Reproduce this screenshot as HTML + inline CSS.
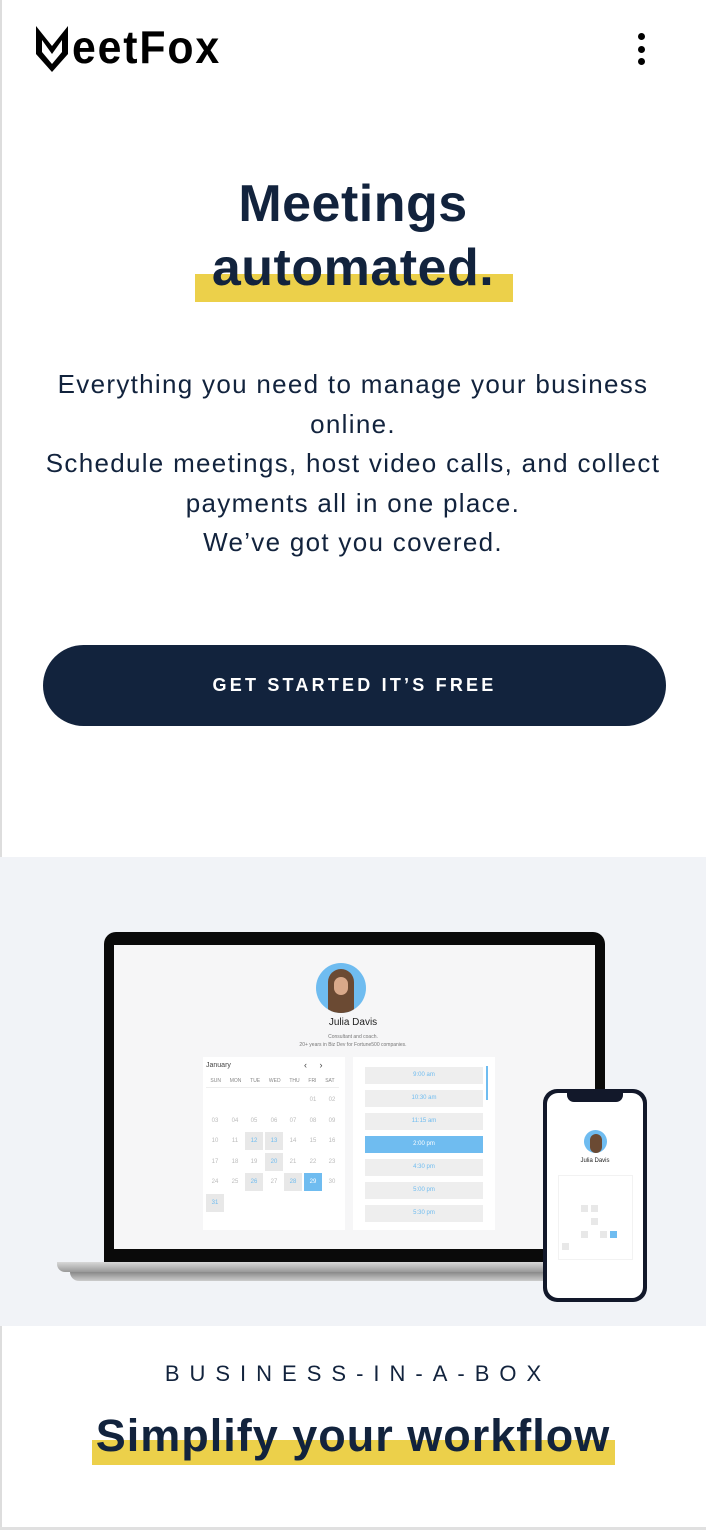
<!DOCTYPE html>
<html><head><meta charset="utf-8"><style>
*{margin:0;padding:0;box-sizing:border-box}
body{width:706px;height:1530px;position:relative;background:#fff;font-family:"Liberation Sans",sans-serif;color:#12233d;overflow:hidden}
.a{position:absolute}
.c{text-align:center;left:0;width:706px}
.d{position:absolute;width:18px;height:18px;font-size:6px;color:#bbb;text-align:center;line-height:18px}
.h{background:#e8e8e8;color:#6fbcf0}
.s{position:absolute;left:365px;width:118px;height:17px;background:#eee;font-size:6px;color:#6fbcf0;text-align:center;line-height:17px}
</style></head><body>
<div class="a" style="left:0;top:0;width:2px;height:1530px;background:#ddd"></div>
<svg class="a" style="left:34px;top:24px" width="36" height="50" viewBox="0 0 36 50"><path d="M2 2 L18 22 L34 2 V30 L18 48 L2 30 Z M8 16 V28 L18 40 L28 28 V16 L18 30 Z" fill="#000" fill-rule="evenodd"/></svg>
<div class="a" style="left:72px;top:20px;font-size:46px;font-weight:bold;color:#000;letter-spacing:2px;transform:scaleX(.93);transform-origin:left">eetFox</div>
<div class="a" style="left:638px;top:33px;width:7px;height:7px;border-radius:50%;background:#000"></div>
<div class="a" style="left:638px;top:46px;width:7px;height:7px;border-radius:50%;background:#000"></div>
<div class="a" style="left:638px;top:58px;width:7px;height:7px;border-radius:50%;background:#000"></div>
<div class="a" style="left:195px;top:274px;width:318px;height:28px;background:#ecd04a"></div>
<div class="a c" style="top:172px;font-size:52px;font-weight:bold;line-height:64px;letter-spacing:0.5px">Meetings<br>automated.</div>
<div class="a c" style="top:365px;font-size:26px;line-height:39.5px;letter-spacing:1.3px;white-space:nowrap">Everything you need to manage your business<br>online.<br>Schedule meetings, host video calls, and collect<br>payments all in one place.<br>We’ve got you covered.</div>
<div class="a" style="left:43px;top:645px;width:623px;height:81px;border-radius:41px;background:#12233d;color:#fff;font-size:18px;font-weight:bold;letter-spacing:3.2px;text-align:center;line-height:81px">GET STARTED IT’S FREE</div>
<div class="a" style="left:0;top:857px;width:706px;height:469px;background:#f1f3f7"></div>
<div class="a" style="left:104px;top:932px;width:501px;height:332px;background:#0a0a0a;border-radius:12px 12px 0 0"></div>
<div class="a" style="left:114px;top:945px;width:481px;height:304px;background:#f6f6f7"></div>
<div class="a" style="left:57px;top:1262px;width:545px;height:10px;background:linear-gradient(#d8d8d8,#999);border-radius:0 0 8px 8px"></div>
<div class="a" style="left:70px;top:1272px;width:520px;height:9px;background:linear-gradient(#888,#ccc);border-radius:0 0 40px 40px"></div>
<div class="a" style="left:316px;top:963px;width:50px;height:50px;border-radius:50%;background:#6fbcf0;overflow:hidden"><div style="position:absolute;left:12px;top:6px;width:26px;height:44px;border-radius:13px 13px 4px 4px;background:#6b4a33"></div><div style="position:absolute;left:18px;top:14px;width:14px;height:18px;border-radius:7px;background:#d9a98a"></div></div>
<div class="a c" style="top:1017px;font-size:10px;color:#222">Julia Davis</div>
<div class="a c" style="top:1033px;font-size:5px;color:#777;line-height:8px">Consultant and coach.<br>20+ years in Biz Dev for Fortune500 companies.</div>
<div class="a" style="left:203px;top:1057px;width:142px;height:173px;background:#fff"></div>
<div class="a" style="left:206px;top:1062px;font-size:7px;color:#444">January</div>
<div class="a" style="left:304px;top:1060px;font-size:9px;color:#444">‹ &nbsp;&nbsp;&nbsp; ›</div>
<div class="a" style="left:206px;top:1078px;width:133px;height:10px;border-bottom:1px solid #eee"></div>
<div class="a" style="left:206px;top:1078px;width:133px;font-size:5px;color:#888;display:flex;justify-content:space-around;white-space:nowrap"><span>SUN</span><span>MON</span><span>TUE</span><span>WED</span><span>THU</span><span>FRI</span><span>SAT</span></div>
<div class="d" style="left:304px;top:1091px">01</div><div class="d" style="left:323px;top:1091px">02</div>
<div class="d" style="left:206px;top:1112px">03</div><div class="d" style="left:226px;top:1112px">04</div><div class="d" style="left:245px;top:1112px">05</div><div class="d" style="left:265px;top:1112px">06</div><div class="d" style="left:284px;top:1112px">07</div><div class="d" style="left:304px;top:1112px">08</div><div class="d" style="left:323px;top:1112px">09</div>
<div class="d" style="left:206px;top:1132px">10</div><div class="d" style="left:226px;top:1132px">11</div><div class="d h" style="left:245px;top:1132px">12</div><div class="d h" style="left:265px;top:1132px">13</div><div class="d" style="left:284px;top:1132px">14</div><div class="d" style="left:304px;top:1132px">15</div><div class="d" style="left:323px;top:1132px">16</div>
<div class="d" style="left:206px;top:1153px">17</div><div class="d" style="left:226px;top:1153px">18</div><div class="d" style="left:245px;top:1153px">19</div><div class="d h" style="left:265px;top:1153px">20</div><div class="d" style="left:284px;top:1153px">21</div><div class="d" style="left:304px;top:1153px">22</div><div class="d" style="left:323px;top:1153px">23</div>
<div class="d" style="left:206px;top:1173px">24</div><div class="d" style="left:226px;top:1173px">25</div><div class="d h" style="left:245px;top:1173px">26</div><div class="d" style="left:265px;top:1173px">27</div><div class="d h" style="left:284px;top:1173px">28</div><div class="d" style="left:304px;top:1173px;background:#6fbcf0;color:#fff">29</div><div class="d" style="left:323px;top:1173px">30</div>
<div class="d h" style="left:206px;top:1194px">31</div>
<div class="a" style="left:353px;top:1057px;width:142px;height:173px;background:#fff"></div>
<div class="a" style="left:486px;top:1066px;width:2px;height:34px;background:#6fbcf0"></div>
<div class="s" style="top:1067px">9:00 am</div><div class="s" style="top:1090px">10:30 am</div><div class="s" style="top:1113px">11:15 am</div>
<div class="s" style="top:1136px;background:#6fbcf0;color:#fff">2:00 pm</div><div class="s" style="top:1159px">4:30 pm</div><div class="s" style="top:1182px">5:00 pm</div><div class="s" style="top:1205px">5:30 pm</div>
<div class="a" style="left:543px;top:1089px;width:104px;height:213px;background:#12182a;border-radius:14px"></div>
<div class="a" style="left:547px;top:1093px;width:96px;height:205px;background:#fff;border-radius:11px"></div>
<div class="a" style="left:567px;top:1092px;width:56px;height:10px;background:#12182a;border-radius:0 0 7px 7px"></div>
<div class="a" style="left:584px;top:1130px;width:23px;height:23px;border-radius:50%;background:#6fbcf0"><div style="margin:4px auto;width:12px;height:19px;border-radius:6px;background:#6b4a33"></div></div>
<div class="a" style="left:547px;top:1158px;width:96px;text-align:center;font-size:6px;color:#222">Julia Davis</div>
<div class="a" style="left:558px;top:1175px;width:75px;height:85px;border:1px solid #f2f2f2"></div>
<div class="a" style="left:562px;top:1243px;width:7px;height:7px;background:#e8e8e8"></div>
<div class="a" style="left:581px;top:1205px;width:7px;height:7px;background:#e8e8e8"></div>
<div class="a" style="left:591px;top:1205px;width:7px;height:7px;background:#e8e8e8"></div>
<div class="a" style="left:591px;top:1218px;width:7px;height:7px;background:#e8e8e8"></div>
<div class="a" style="left:581px;top:1231px;width:7px;height:7px;background:#e8e8e8"></div>
<div class="a" style="left:600px;top:1231px;width:7px;height:7px;background:#e8e8e8"></div>
<div class="a" style="left:610px;top:1231px;width:7px;height:7px;background:#6fbcf0"></div>
<div class="a c" style="top:1361px;font-size:22px;letter-spacing:10px;padding-left:10px">BUSINESS-IN-A-BOX</div>
<div class="a" style="left:92px;top:1440px;width:523px;height:25px;background:#ecd04a"></div>
<div class="a c" style="top:1408px;font-size:45px;font-weight:bold;line-height:56px;letter-spacing:1px">Simplify your workflow</div>
<div class="a" style="left:0;top:1527px;width:706px;height:3px;background:#e0e0e0"></div>
</body></html>
